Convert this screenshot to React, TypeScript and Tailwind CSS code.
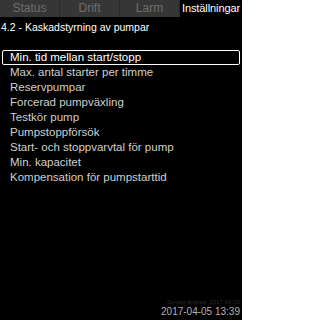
const tabs = ["Status", "Drift", "Larm"];

const items = [
  "Min. tid mellan start/stopp",
  "Max. antal starter per timme",
  "Reservpumpar",
  "Forcerad pumpväxling",
  "Testkör pump",
  "Pumpstoppförsök",
  "Start- och stoppvarvtal för pump",
  "Min. kapacitet",
  "Kompensation för pumpstarttid",
];

export default function App() {
  return (
    <main
      className="w-[242px] h-[320px] bg-black text-white overflow-hidden flex flex-col"
      style={{ fontFamily: '"Liberation Sans", Arial, sans-serif' }}
    >
      {/* Tab bar */}
      <div className="flex h-[17px] shrink-0">
        {tabs.map((tab) => (
          <div
            key={tab}
            className="w-[60px] bg-[#363636] text-[#6e6e6e] text-[12px] leading-[17px] text-center border-r border-[#2a2a2a]"
          >
            {tab}
          </div>
        ))}
        <div className="flex-1 bg-black text-white text-[11px] leading-[17px] text-center whitespace-nowrap tracking-[-0.1px]">
          Inställningar
        </div>
      </div>

      {/* Title */}
      <div className="text-[10.5px] leading-[13px] px-[1px] pt-[4px]">4.2 - Kaskadstyrning av pumpar</div>

      {/* Menu */}
      <div className="mt-[16px] flex flex-col px-[2px]">
        {items.map((item, i) => (
          <div
            key={item}
            className={`h-[15px] flex items-center pl-[7px] text-[11.5px] ${
              i === 0 ? "border border-white rounded-[2px] text-white" : "border border-transparent text-[#cfcfcf]"
            }`}
          >
            {item}
          </div>
        ))}
      </div>

      {/* Footer */}
      <div className="mt-auto flex flex-col items-end pr-[2px] pb-[2px]">
        <div className="text-[6px] leading-[8px] text-[#2a2a2a]">Senast ändrad: 2017-04-05</div>
        <div className="text-[10px] leading-[12px] text-[#b0b0b0]">2017-04-05 13:39</div>
      </div>
    </main>
  );
}
